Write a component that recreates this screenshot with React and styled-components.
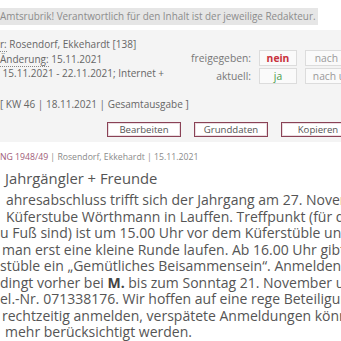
import React from 'react';
import styled, { createGlobalStyle } from 'styled-components';

const GlobalStyle = createGlobalStyle`
    html, body {
        margin: 0;
        padding: 0;
        background: #ffffff;
        overflow: hidden;
    }
    body {
        font-family: "Open Sans", "Noto Sans", sans-serif;
        color: #555;
    }
`;

const bodyLines = [
    { text: 'ahresabschluss trifft sich der Jahrgang am 27. November', indent: 6 },
    { text: 'Küferstube Wörthmann in Lauffen. Treffpunkt (für die', indent: 6 },
    { text: 'u Fuß sind) ist um 15.00 Uhr vor dem Küferstüble und', indent: 0 },
    { text: 'man erst eine kleine Runde laufen. Ab 16.00 Uhr gibt es', indent: 2 },
    { text: 'stüble ein „Gemütliches Beisammensein“. Anmelden', indent: 0 },
    { text: <>dingt vorher bei <b>M.</b> bis zum Sonntag 21. November und</>, indent: 0 },
    { text: 'el.-Nr. 071338176. Wir hoffen auf eine rege Beteiligung', indent: 0 },
    { text: 'rechtzeitig anmelden, verspätete Anmeldungen können', indent: 2 },
    { text: 'mehr berücksichtigt werden.', indent: 5 },
];

export default function App() {
    return (
        <>
            <GlobalStyle />
            <Page>
                <NoticeBar>Amtsrubrik! Verantwortlich für den Inhalt ist der jeweilige Redakteur.</NoticeBar>

                <InfoPanel>
                    <InfoRow>
                        <MetaList>
                            <MetaLine><Abbr>r:</Abbr> Rosendorf, Ekkehardt [138]</MetaLine>
                            <MetaLine><Abbr>Änderung:</Abbr> 15.11.2021</MetaLine>
                            <MetaLine>&nbsp;15.11.2021 - 22.11.2021; Internet +</MetaLine>
                        </MetaList>
                        <StatusGrid>
                            <StatusLabel>freigegeben:</StatusLabel>
                            <StatusBox $tone="no">nein</StatusBox>
                            <StatusBox>nach oben</StatusBox>
                            <StatusLabel>aktuell:</StatusLabel>
                            <StatusBox $tone="yes">ja</StatusBox>
                            <StatusBox>nach unten</StatusBox>
                        </StatusGrid>
                    </InfoRow>
                    <IssueLine>[ KW 46 | 18.11.2021 | Gesamtausgabe ]</IssueLine>
                    <ButtonRow>
                        <ActionButton>Bearbeiten</ActionButton>
                        <ActionButton>Grunddaten</ActionButton>
                        <ActionButton>Kopieren</ActionButton>
                    </ButtonRow>
                </InfoPanel>

                <Article>
                    <ArticleMeta><MetaCode>NG 1948/49</MetaCode> | Rosendorf, Ekkehardt | 15.11.2021</ArticleMeta>
                    <Title>Jahrgängler + Freunde</Title>
                    <Body>
                        {bodyLines.map((line, i) => (
                            <BodyLine key={i} $indent={line.indent}>{line.text}</BodyLine>
                        ))}
                    </Body>
                </Article>
            </Page>
        </>
    );
}

const Page = styled.div`
    width: 341px;
    height: 341px;
    overflow: hidden;
    display: flex;
    flex-direction: column;
`;

const NoticeBar = styled.div`
    margin-top: 8px;
    width: 318px;
    height: 17px;
    line-height: 17px;
    flex-shrink: 0;
    background: #e6e6e6;
    color: #8c8c8c;
    font-size: 9.9px;
    white-space: nowrap;
    overflow: hidden;
`;

const InfoPanel = styled.div`
    margin-top: 5px;
    width: 400px;
    background: #f4f4f4;
    padding: 7px 0 5px 0;
    display: flex;
    flex-direction: column;
    flex-shrink: 0;
`;

const InfoRow = styled.div`
    display: flex;
    align-items: flex-start;
`;

const MetaList = styled.div`
    flex: 0 0 190px;
    display: flex;
    flex-direction: column;
`;

const MetaLine = styled.div`
    font-size: 10px;
    line-height: 14.5px;
    color: #666;
    white-space: nowrap;
`;

const Abbr = styled.span`
    border-bottom: 1px dotted #888;
`;

const StatusGrid = styled.div`
    margin-top: 13px;
    display: grid;
    grid-template-columns: 61px 38px 70px;
    column-gap: 8px;
    row-gap: 2px;
    align-items: center;
`;

const StatusLabel = styled.div`
    text-align: right;
    font-size: 10.3px;
    color: #777;
    white-space: nowrap;
`;

const StatusBox = styled.div`
    height: 14px;
    line-height: 14px;
    border: 1px solid #dcdcdc;
    background: #fafafa;
    text-align: center;
    font-size: 10.3px;
    white-space: nowrap;
    color: ${({ $tone }) => ($tone === 'no' ? '#c8323c' : $tone === 'yes' ? '#4a9a4a' : '#999')};
    font-weight: ${({ $tone }) => ($tone === 'no' ? 700 : 400)};
`;

const IssueLine = styled.div`
    margin-top: 13px;
    font-size: 10px;
    line-height: 15px;
    color: #666;
    white-space: nowrap;
`;

const ButtonRow = styled.div`
    margin-top: 10px;
    padding-left: 107px;
    display: flex;
    gap: 13px;
`;

const ActionButton = styled.button`
    width: 74px;
    height: 15px;
    padding: 0;
    background: #ffffff;
    border: 1px solid #8a4256;
    box-shadow: inset 0 0 0 1px #eadde1;
    color: #555;
    font-family: inherit;
    font-size: 9.6px;
    line-height: 13px;
    white-space: nowrap;
`;

const Article = styled.div`
    display: flex;
    flex-direction: column;
`;

const ArticleMeta = styled.div`
    margin-top: 9px;
    font-size: 8.7px;
    line-height: 13px;
    color: #8a8a8a;
    white-space: nowrap;
`;

const MetaCode = styled.span`
    color: #a05c78;
`;

const Title = styled.div`
    margin-top: 4px;
    padding-left: 5px;
    font-size: 14.8px;
    line-height: 20px;
    color: #555;
    white-space: nowrap;
`;

const Body = styled.div`
    margin-top: 4px;
    display: flex;
    flex-direction: column;
`;

const BodyLine = styled.div`
    padding-left: ${({ $indent }) => $indent}px;
    font-size: 14px;
    line-height: 16.5px;
    color: #555;
    white-space: nowrap;

    b {
        font-weight: 700;
        color: #444;
    }
`;
